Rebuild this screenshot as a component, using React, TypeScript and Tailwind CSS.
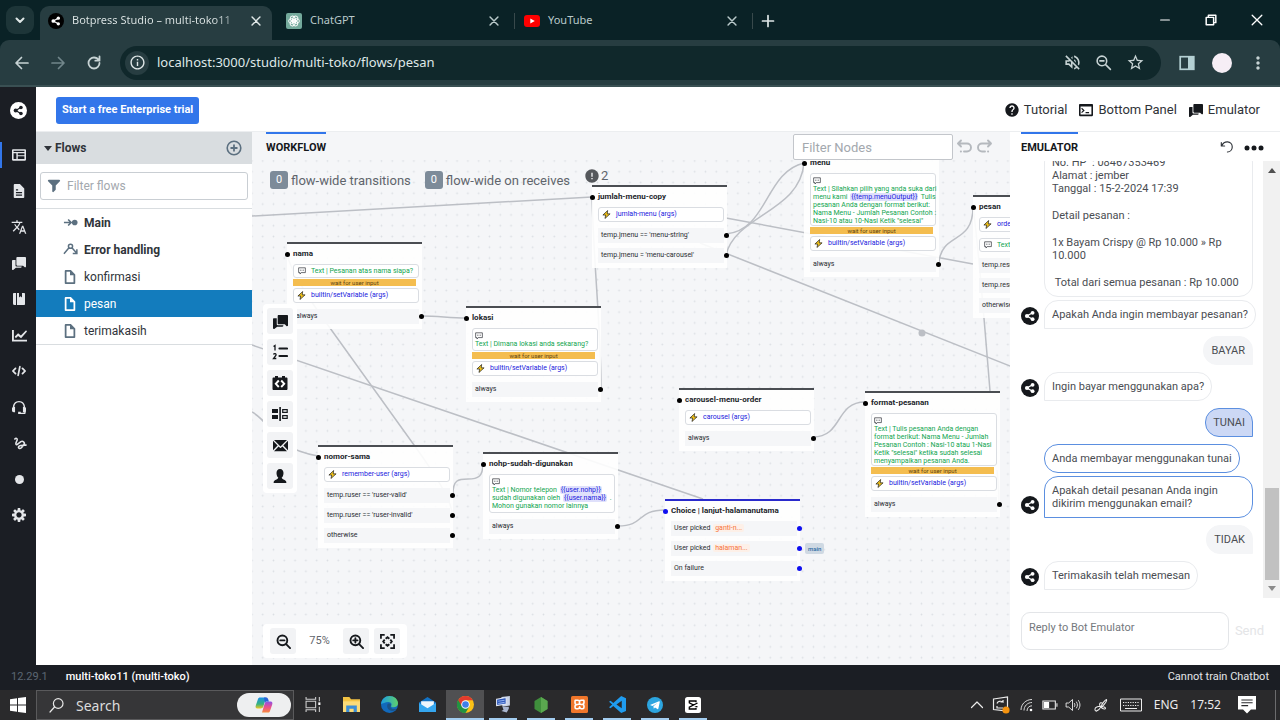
import React from "react";
import type { ReactNode } from "react";
import { MdTranslate, MdOutlineVolumeOff, MdStarBorder, MdHelp, MdError, MdMoreVert, MdOutlineInfo } from "react-icons/md";

type IconProps = { className?: string };

const P = {
  code: "M15.71 7.29l-3-3a1.003 1.003 0 00-1.42 1.42L13.59 8l-2.29 2.29a1.003 1.003 0 001.42 1.42l3-3c.18-.18.29-.43.29-.71 0-.28-.12-.53-.3-.71zM5 5a1.003 1.003 0 00-1.71-.71l-3 3C.11 7.47 0 7.72 0 8c0 .28.11.53.29.71l3 3a1.003 1.003 0 001.42-1.42L2.41 8 4.7 5.71c.19-.18.3-.43.3-.71zm4-3c-.48 0-.87.35-.96.81l-2 10c-.01.06-.04.12-.04.19 0 .55.45 1 1 1 .48 0 .87-.35.96-.81l2-10c.01-.06.04-.12.04-.19 0-.55-.45-1-1-1z",
  cog: "M15.19 6.39h-1.85c-.11-.37-.27-.71-.45-1.04l1.36-1.36c.31-.31.31-.82 0-1.13l-1.13-1.13a.803.803 0 00-1.13 0l-1.36 1.36c-.33-.17-.67-.33-1.04-.44V.79c0-.44-.36-.8-.8-.8h-1.6c-.44 0-.8.36-.8.8v1.86c-.39.12-.75.28-1.1.47l-1.3-1.3c-.3-.3-.79-.3-1.09 0L1.82 2.91c-.3.3-.3.79 0 1.09l1.3 1.3c-.2.34-.36.7-.48 1.09H.79c-.44 0-.8.36-.8.8v1.6c0 .44.36.8.8.8h1.85c.11.37.27.71.45 1.04l-1.36 1.36c-.31.31-.31.82 0 1.13l1.13 1.13c.31.31.82.31 1.13 0l1.36-1.36c.33.18.67.33 1.04.44v1.86c0 .44.36.8.8.8h1.6c.44 0 .8-.36.8-.8v-1.86c.39-.12.75-.28 1.1-.47l1.3 1.3c.3.3.79.3 1.09 0l1.09-1.09c.3-.3.3-.79 0-1.09l-1.3-1.3c.19-.35.36-.71.48-1.1h1.85c.44 0 .8-.36.8-.8v-1.6a.816.816 0 00-.81-.79zm-7.2 4.6c-1.66 0-3-1.34-3-3s1.34-3 3-3 3 1.34 3 3-1.34 3-3 3z",
  document: "M9 0H3c-.55 0-1 .45-1 1v14c0 .55.45 1 1 1h10c.55 0 1-.45 1-1V5L9 0zm3 14H4V2h4v4h4v8z",
  documentText: "M9 0H3c-.55 0-1 .45-1 1v14c0 .55.45 1 1 1h10c.55 0 1-.45 1-1V5L9 0zM4.500 6h2.500v1.500H4.500zM4.500 9h7v1.500h-7zM4.500 12h7v1.500h-7z",
  chat: "M4 11V4.500H1c-.55 0-1 .45-1 1V15a1 1 0 001.710.71L4.410 13.500H10c.55 0 1-.45 1-1V12H5c-.55 0-1-.45-1-1zM15 1H6c-.55 0-1 .45-1 1v8c0 .55.45 1 1 1h6.590l1.700 1.700c.6.6 1.710.2 1.710-.7V2c0-.55-.45-1-1-1z",
  envelope: "M0 3.06v9.88L4.94 8 0 3.06zM14.94 2H1.06L8 8.94 14.94 2zm-6.41 8.53c-.14.14-.32.22-.53.22s-.39-.08-.53-.22L6 9.06 1.06 14h13.88L10 9.06l-1.47 1.47zM11.06 8L16 12.94V3.06L11.06 8z",
  filter: "M13.99.99h-12a1.003 1.003 0 00-.71 1.71l4.71 4.71V14a1.003 1.003 0 001.71.71l2-2c.18-.18.29-.43.29-.71V7.41L14.7 2.7a1.003 1.003 0 00-.71-1.71z",
  panel: "M1 1.500h14c.55 0 1 .45 1 1v11c0 .55-.45 1-1 1H1c-.55 0-1-.45-1-1v-11c0-.55.45-1 1-1zM1.800 6v6.700H5V6zM6.600 6v2.200h7.600V6zM6.600 9.500v3.200h7.600V9.500zM1.800 3.200v1.300h12.400V3.200z",
  manual: "M1 0h3v16H2a2 2 0 01-2-2V1c0-.55.45-1 1-1zM5.300 0H8v6l2-1.600L12 6V0h3c.55 0 1 .45 1 1v14c0 .55-.45 1-1 1H5.300z",
  chart: "M0 2h2v10.500h14V14.500H0zM3 9l3.500-3.500 3 2.500L15 2.500l1 1.200L9.700 11 6.500 8.400 4 11z",
  headset: "M8 1C3.800 1 1 4.200 1 8l-1 1v3c0 1.100.9 2 2 2h1.500V8H2.700C2.700 5 5 2.700 8 2.700S13.300 5 13.300 8h-.8v6H14v.5H10V13.500H7V16h7.500c.8 0 1-.5 1-1.500.4-.5.5-1.500.5-2.500V9l-1-1c0-3.800-2.800-7-7-7z",
  person: "M8 0C5.300 0 4 2 4 4.500 4 7 5 9 6 9.800c0 1-.6 1.600-2 2.100C2 12.600.7 13.300.7 16h14.600c0-2.700-1.300-3.400-3.300-4.100-1.400-.5-2-1.100-2-2.100 1-.8 2-2.800 2-5.300C12 2 10.700 0 8 0z",
  console: "M1 1h14c.55 0 1 .45 1 1v12c0 .55-.45 1-1 1H1c-.55 0-1-.45-1-1V2c0-.55.45-1 1-1zM1.800 4v9.200h12.400V4zM3.400 5.500L6.500 8.500 3.400 11.500 2.500 10.500 4.600 8.500 2.500 6.500zM7.500 10.300h4v1.400h-4z",
};

function Glyph({ d, className = "" }: { d: string; className?: string }) {
  return (
    <svg viewBox="0 0 16 16" className={className} fill="currentColor" fillRule="evenodd" aria-hidden="true">
      <path d={d} />
    </svg>
  );
}

function Line({ d, className = "", w = 1.5 }: { d: string; className?: string; w?: number }) {
  return (
    <svg viewBox="0 0 16 16" className={className} fill="none" stroke="currentColor" strokeWidth={w} strokeLinecap="round" strokeLinejoin="round" aria-hidden="true">
      <path d={d} />
    </svg>
  );
}

function BotLogo({ className = "", bg, fg }: IconProps & { bg: string; fg: string }) {
  return (
    <svg viewBox="0 0 18 18" className={className} aria-hidden="true">
      <circle cx="9" cy="9" r="9" fill={bg} />
      <path d="M11.500 5.800L6 9l5.500 3.200" stroke={fg} strokeWidth="1.300" fill="none" />
      <circle cx="11.600" cy="5.800" r="1.900" fill={fg} />
      <circle cx="6" cy="9" r="2.100" fill={fg} />
      <circle cx="11.600" cy="12.200" r="1.900" fill={fg} />
    </svg>
  );
}

const CLOSE = "M3.500 3.500l9 9M12.500 3.500l-9 9";

function BrowserTabs() {
  return (
    <div className="flex h-10 shrink-0 items-end bg-[#0a2226] pl-[6px] text-[11px] text-[#b9c9ca]">
      <button aria-label="Search tabs" className="mb-[6px] flex h-7 w-7 items-center justify-center rounded-[9px] bg-[#1d3538] text-[#dfe7e7]">
        <Line d="M4.500 6.500L8 10l3.500-3.500" className="h-4 w-4" w={2} />
      </button>
      <div className="ml-[6px] flex h-[34px] w-[232px] items-center rounded-t-[9px] bg-[#273d41] pb-[5px] pl-2 pr-[9px] text-[#dfe7e7]">
        <BotLogo className="h-4 w-4 shrink-0" bg="#000" fg="#fff" />
        <span className="ml-2 flex-1 whitespace-nowrap bg-gradient-to-r from-[#dfe7e7] from-85% to-[#6f8082] bg-clip-text text-transparent">Botpress Studio – multi-toko11</span>
        <button aria-label="Close tab" className="ml-[10px]"><Line d={CLOSE} className="h-[14px] w-[14px]" w={1.7} /></button>
      </div>
      <div className="flex h-[34px] w-[242px] items-center pb-[5px] pl-[14px] pr-2">
        <svg viewBox="0 0 16 16" className="h-4 w-4 shrink-0" aria-hidden="true">
          <rect width="16" height="16" rx="2" fill="#74aa9c" />
          <g fill="none" stroke="#fff" strokeWidth=".9">
            <ellipse cx="8" cy="5.800" rx="2.400" ry="3.200" transform="rotate(30 8 8)" />
            <ellipse cx="8" cy="5.800" rx="2.400" ry="3.200" transform="rotate(90 8 8)" />
            <ellipse cx="8" cy="5.800" rx="2.400" ry="3.200" transform="rotate(150 8 8)" />
            <ellipse cx="8" cy="5.800" rx="2.400" ry="3.200" transform="rotate(210 8 8)" />
            <ellipse cx="8" cy="5.800" rx="2.400" ry="3.200" transform="rotate(270 8 8)" />
            <ellipse cx="8" cy="5.800" rx="2.400" ry="3.200" transform="rotate(330 8 8)" />
          </g>
        </svg>
        <span className="ml-2 flex-1">ChatGPT</span>
        <button aria-label="Close tab" className="mr-[5px]"><Line d={CLOSE} className="h-[14px] w-[14px]" w={1.7} /></button>
      </div>
      <div className="flex h-[34px] w-[238px] items-center pb-[5px]">
        <span className="h-4 w-px shrink-0 bg-[#38494b]" />
        <svg viewBox="0 0 16 12" className="ml-[9px] h-3 w-4 shrink-0" aria-hidden="true">
          <rect width="16" height="12" rx="3" fill="#f00" />
          <path d="M6.300 3.400v5.200L10.800 6z" fill="#fff" />
        </svg>
        <span className="ml-2 flex-1">YouTube</span>
        <button aria-label="Close tab" className="mr-[13px]"><Line d={CLOSE} className="h-[14px] w-[14px]" w={1.7} /></button>
      </div>
      <div className="flex h-[34px] flex-1 items-center pb-[5px]">
        <span className="h-4 w-px bg-[#38494b]" />
        <button aria-label="New tab" className="ml-[7px] text-[#dfe7e7]"><Line d="M8 2.500v11M2.500 8h11" className="h-4 w-4" w={1.7} /></button>
      </div>
      <div className="mb-[13px] flex items-center gap-8 pr-4 text-white">
        <button aria-label="Minimize"><Line d="M3 8h10" className="h-[14px] w-[14px]" w={1.3} /></button>
        <button aria-label="Restore"><Line d="M2.500 5h8.500v8.500H2.500zM5 5V2.500h8.500V11H11" className="h-[14px] w-[14px]" w={1.7} /></button>
        <button aria-label="Close window"><Line d="M2.500 2.500l11 11M13.500 2.500l-11 11" className="h-[14px] w-[14px]" w={1.5} /></button>
      </div>
    </div>
  );
}

function AddressBar() {
  return (
    <div className="bg-[#0a2226]">
      <div className="flex h-[47px] shrink-0 items-center rounded-t-[9px] border-b-2 border-[#3a5053] bg-[#273d41] pl-[14px] pr-3 text-[#c7d3d4]">
        <button aria-label="Back"><Line d="M14 8H2.500M7.500 2.500L2 8l5.500 5.500" className="h-4 w-4" w={1.7} /></button>
        <button aria-label="Forward" className="ml-5 text-[#71868a]"><Line d="M2 8h11.500M8.500 2.500L14 8l-5.500 5.500" className="h-4 w-4" w={1.7} /></button>
        <button aria-label="Reload" className="ml-5"><Line d="M13.500 8A5.500 5.500 0 118 2.500c2 0 3.700 1 4.700 2.600M13.500 1.500v4.200H9.300" className="h-4 w-4" w={1.8} /></button>
        <div className="ml-[18px] flex h-[34px] flex-1 items-center rounded-full bg-[#10282b] pl-[5px] pr-4">
          <span className="flex h-6 w-6 items-center justify-center rounded-full bg-[#273d41]">
            <MdOutlineInfo className="h-[17px] w-[17px] text-[#dfe7e7]" />
          </span>
          <input aria-label="Address" readOnly value="localhost:3000/studio/multi-toko/flows/pesan" className="ml-2 min-w-0 flex-1 bg-transparent text-[13px] text-[#dfe7e7] outline-none" />
          <MdOutlineVolumeOff className="h-[19px] w-[19px]" />
          <Line d="M11 6.500a4.500 4.500 0 11-9 0 4.500 4.500 0 019 0zM10 10l4.500 4.500M4.600 6.500h3.800" className="ml-[13px] h-[17px] w-[17px]" />
          <MdStarBorder className="ml-[14px] h-[19px] w-[19px]" />
        </div>
        <button aria-label="Side panel" className="ml-[18px]">
          <svg viewBox="0 0 16 16" className="h-4 w-4" aria-hidden="true"><rect x="1.200" y="1.700" width="13.600" height="12.600" fill="none" stroke="#b4d0d3" strokeWidth="1.700" /><rect x="9" y="1" width="6" height="14" fill="#b4d0d3" /></svg>
        </button>
        <button aria-label="Profile" className="ml-[17px] h-5 w-5 rounded-full bg-[#f6eef5]" />
        <button aria-label="Menu" className="ml-4"><MdMoreVert className="h-5 w-5" /></button>
      </div>
    </div>
  );
}

const NAV: { label: string; icon: ReactNode }[] = [
  { label: "Flows", icon: <Glyph d={P.panel} className="h-[14px] w-[14px]" /> },
  { label: "Content", icon: <Glyph d={P.documentText} className="h-[14px] w-[14px]" /> },
  { label: "NLU", icon: <MdTranslate className="h-4 w-4" /> },
  { label: "Q&A", icon: <Glyph d={P.chat} className="h-[14px] w-[14px]" /> },
  { label: "Library", icon: <Glyph d={P.manual} className="h-[14px] w-3" /> },
  { label: "Analytics", icon: <Glyph d={P.chart} className="h-[15px] w-[15px]" /> },
  { label: "Code editor", icon: <Glyph d={P.code} className="h-[14px] w-[14px]" /> },
  { label: "Human in the loop", icon: <Glyph d={P.headset} className="h-[14px] w-[14px]" /> },
  { label: "Misunderstood", icon: <Line d="M3 3.200C4.200 2 6 2.600 5.500 4.300L4.200 7.500C3.700 9 5 9.600 6 8.700L9.500 6C11.500 4.600 14.500 7.500 12.500 9.500L10 12.500C8.500 14 6 13 7.200 11.200 8.500 9.500 12 9.700 15 9.700" className="h-[15px] w-[15px]" w={1.7} /> },
  { label: "Module", icon: <span className="h-[9px] w-[9px] rounded-full bg-current" /> },
  { label: "Settings", icon: <Glyph d={P.cog} className="h-[14px] w-[14px]" /> },
];

function SideNav() {
  return (
    <nav className="flex w-9 shrink-0 flex-col bg-[#1b1e24] text-[#e4e6e9]">
      <a href="#home" aria-label="Home" className="flex h-[50px] items-center justify-center pb-1"><BotLogo className="h-[17px] w-[17px]" bg="#fff" fg="#1b1e24" /></a>
      {NAV.map((n, i) => (
        <a key={n.label} href={"#" + i} aria-label={n.label} className="flex h-9 items-center">
          <span className={i === 0 ? "h-[26px] w-[2px] bg-[#3276ea]" : "h-[26px] w-[2px]"} />
          <span className="flex flex-1 items-center justify-center">{n.icon}</span>
        </a>
      ))}
    </nav>
  );
}

function TopBar() {
  return (
    <header className="flex h-[45px] shrink-0 items-center border-b border-[#eceef0] bg-white pl-5 pr-5 pt-[2px] text-[13px] text-[#1b1e24]">
      <button className="h-[27px] rounded-[3px] bg-[#3276ea] px-[6px] text-[11px] font-bold text-white">Start a free Enterprise trial</button>
      <div className="ml-auto flex items-center gap-3 text-[#303338]">
        <button className="flex items-center gap-1"><MdHelp className="h-4 w-4 text-[#15181c]" />Tutorial</button>
        <button className="flex items-center gap-[5px]"><Glyph d={P.console} className="h-[14px] w-[14px] text-[#15181c]" />Bottom Panel</button>
        <button className="flex items-center gap-[5px]"><Glyph d={P.chat} className="h-[14px] w-[14px] text-[#15181c]" />Emulator</button>
      </div>
    </header>
  );
}

const TREE: { name: string; kind: "main" | "error" | "doc" }[] = [
  { name: "Main", kind: "main" },
  { name: "Error handling", kind: "error" },
  { name: "konfirmasi", kind: "doc" },
  { name: "pesan", kind: "doc" },
  { name: "terimakasih", kind: "doc" },
];

function FlowsPanel() {
  return (
    <aside className="flex w-[216px] shrink-0 flex-col bg-white text-[12px] text-[#30343a]">
      <div className="flex h-8 items-center bg-[#d9dde0] pl-2 pr-[10px]">
        <svg viewBox="0 0 8 5" className="h-[5px] w-2" aria-hidden="true"><path d="M0 0h8L4 5z" fill="#30343a" /></svg>
        <h2 className="ml-[3px] flex-1 font-bold">Flows</h2>
        <button aria-label="Add flow" className="text-[#5c7080]">
          <svg viewBox="0 0 16 16" className="h-4 w-4" fill="none" stroke="currentColor" aria-hidden="true"><circle cx="8" cy="8" r="6.800" strokeWidth="1.600" /><path d="M8 4.500v7M4.500 8h7" strokeWidth="1.800" /></svg>
        </button>
      </div>
      <div className="border-b border-[#d9dde0] px-1 pb-2 pt-2">
        <label className="flex h-7 items-center rounded-[3px] border border-[#c9ced3] px-[6px]">
          <Glyph d={P.filter} className="h-[14px] w-[14px] text-[#5c7080]" />
          <input aria-label="Filter flows" placeholder="Filter flows" className="ml-[6px] min-w-0 flex-1 outline-none placeholder:text-[#a3a8ae]" />
        </label>
      </div>
      <ul className="border-b border-[#d9dde0]">
        {TREE.map((t) => (
          <li key={t.name}>
            <a href={"#" + t.name} className={t.name === "pesan" ? "flex h-[27px] items-center bg-[#137cbd] pl-[26px] text-white" : "flex h-[27px] items-center pl-[26px]"}>
              <span className={t.name === "pesan" ? "flex w-4 justify-center" : "flex w-4 justify-center text-[#5c7080]"}>
                {t.kind === "doc" && <Glyph d={P.document} className="h-[14px] w-[14px]" />}
                {t.kind === "main" && <svg viewBox="0 0 16 16" className="h-[15px] w-[15px]" aria-hidden="true"><path d="M1 8h7M5.500 4.800L8.700 8l-3.200 3.200" fill="none" stroke="currentColor" strokeWidth="1.700" /><circle cx="12.500" cy="8" r="3" fill="currentColor" /></svg>}
                {t.kind === "error" && <svg viewBox="0 0 16 16" className="h-[15px] w-[15px]" aria-hidden="true" fill="none" stroke="currentColor" strokeWidth="1.600"><circle cx="8" cy="4.500" r="2.200" /><path d="M6.400 6.200L1 12.500M9.500 6.200l4.500 5M14.800 7.800v4.400h-4.400" /></svg>}
              </span>
              <span className={t.kind === "doc" ? "ml-[6px]" : "ml-[6px] font-bold"}>{t.name}</span>
            </a>
          </li>
        ))}
      </ul>
    </aside>
  );
}

function Bolt() {
  return <svg viewBox="0 0 10 10" className="h-[9px] w-[9px] shrink-0" aria-hidden="true"><path d="M6.300.6L1 5.600h3.100L3.300 9.400 9 4.300H5.800z" fill="#f5c518" stroke="#222" strokeWidth=".8" strokeLinejoin="round" /></svg>;
}
function Speech() {
  return <svg viewBox="0 0 10 10" className="h-2 w-2 shrink-0" aria-hidden="true"><path d="M.8 1h8.400v6H4L2.500 8.800V7H.8z" fill="none" stroke="#33373d" strokeWidth=".9" /><path d="M2.500 4h1M4.500 4h1M6.500 4h1" stroke="#33373d" strokeWidth="1" /></svg>;
}
function Action({ children }: { children: string }) {
  return (
    <div className="flex h-[15px] items-center overflow-hidden rounded-[3px] border border-[#dadde2] bg-white pl-[3px] text-[7px] text-[#2020dd]">
      <Bolt /><span className="ml-[5px] whitespace-nowrap">{children}</span>
    </div>
  );
}
function Say({ children }: { children: string }) {
  return (
    <div className="flex h-[14px] items-center rounded-[3px] border border-[#dadde2] bg-white pl-1 text-[7px] text-[#12a550]">
      <Speech /><span className="ml-[5px] whitespace-nowrap">{children}</span>
    </div>
  );
}
function Tok({ children }: { children: string }) {
  return <span className="mx-px rounded-[2px] bg-[#dfe0fb] px-px text-[#2020dd]">{children}</span>;
}
function LongSay({ lines }: { lines: ReactNode[] }) {
  return (
    <div className="max-h-[53px] rounded-[3px] border border-[#dadde2] bg-white px-[2px] pb-[2px] pt-[3px] text-[7px] leading-[8px] text-[#12a550]">
      <Speech />
      {lines.map((l, i) => <p key={i} className="whitespace-nowrap">{l}</p>)}
    </div>
  );
}
function Wait() {
  return <div className="mb-px mr-[3px] h-[7px] bg-[#f4bd4f] text-center text-[6px] leading-[7px] text-[#5b430f]">wait for user input</div>;
}

function FlowNode({ place, title, body, rows, choice = false }: { place: string; title: string; body?: ReactNode; rows: ReactNode[]; choice?: boolean }) {
  const dot = choice ? "absolute h-[5px] w-[5px] rounded-full bg-[#1010f0]" : "absolute h-[5px] w-[5px] rounded-full bg-black";
  return (
    <section className={"absolute w-[135px] border-t-2 bg-white/90 pb-[5px] pl-[6px] pr-[3px] " + (choice ? "border-[#2a2acc] " : "border-[#4a4d52] ") + place}>
      <div className="flex h-[20px] items-center">
        <span className={dot + " -left-[2px]"} />
        <h3 className="whitespace-nowrap text-[8px] font-bold text-[#22252a]">{title}</h3>
      </div>
      {body && <div className="mb-[6px] flex flex-col gap-px">{body}</div>}
      <ul className="flex flex-col gap-[5px]">
        {rows.map((r, i) => (
          <li key={i} className="flex h-[15px] items-center bg-[#f5f6f8] pl-[3px] text-[7px] text-[#2a2d32]">
            <span className="whitespace-nowrap">{r}</span>
            <span className={dot + " -right-[2px]"} />
          </li>
        ))}
      </ul>
    </section>
  );
}

function Wires() {
  return (
    <svg className="absolute inset-0 h-full w-full" aria-hidden="true">
      <defs>
        <pattern id="grid-dots" x="5.300" y="6.300" width="10.800" height="10.800" patternUnits="userSpaceOnUse">
          <circle cx="5.400" cy="5.400" r=".9" fill="#dcdfe4" />
        </pattern>
      </defs>
      <rect width="100%" height="100%" fill="url(#grid-dots)" />
      <g transform="translate(-252 -160)" fill="none" stroke="#bcbfc5" strokeWidth="1.500">
        <path d="M252 216L592 197" />
        <path d="M422 316C440 316 448 318 467 318" />
        <path d="M287 253C290 275 330 328 330 328L414 445C430 467 452 500 452 514" />
        <path d="M252 345L703 499" />
        <path d="M252 412C275 425 270 447 318 456" />
        <path d="M453 494C453 480 458 479 468 479S483 477 483 463" />
        <path d="M618 526C645 526 636 510 665 510" />
        <path d="M813 437C843 437 835 402 865 402" />
        <path d="M726 234C768 230 765 172 804 163" />
        <path d="M726 255C735 215 800 212 804 163" />
        <path d="M726 218L973 264" />
        <path d="M700 243L1020 370" />
        <path d="M939 262C942 232 973 245 973 207" />
        <path d="M973 207C978 240 985 330 990 391" />
        <path d="M601 388C601 330 594 270 592 197" />
        <path d="M999 502C999 490 998 480 997 470" />
        <circle cx="922" cy="333" r="3.500" fill="#bcbfc5" stroke="none" />
      </g>
    </svg>
  );
}

const TOOLS: { label: string; icon: ReactNode }[] = [
  { label: "Say", icon: <Glyph d={P.chat} className="h-[15px] w-[15px]" /> },
  { label: "Choice", icon: <svg viewBox="0 0 16 16" className="h-4 w-4" fill="none" stroke="currentColor" strokeWidth="1.300" aria-hidden="true"><path d="M1.500 2.500L3 1.500V6.500M1.500 10.500c.5-1.300 3-1 2.500.7L1.500 14.500H4.300" /><path d="M7.500 4.500H15M7.500 12H15" strokeWidth="2.200" strokeLinecap="round" /></svg> },
  { label: "Execute code", icon: <svg viewBox="0 0 16 16" className="h-4 w-4" aria-hidden="true"><path d="M3 1h3v1.500h4V1h3v1.500h1.500c.5 0 1 .5 1 1v10.500c0 .5-.5 1-1 1h-13c-.5 0-1-.5-1-1V3.500c0-.5.500-1 1-1H3z" fill="currentColor" /><path d="M6.800 5.500L3.800 8.800l3 3.200M9.200 5.500l3 3.300-3 3.200" stroke="#fff" strokeWidth="1.900" fill="none" /></svg> },
  { label: "Split", icon: <svg viewBox="0 0 16 16" className="h-4 w-4" fill="currentColor" aria-hidden="true"><path d="M0 3h6v4H0zM0 9h6v4H0zM7.300 1h1.600v14H7.300z" /><path d="M10.700 3.700h4.500v2.600h-4.500zM10.700 9.700h4.500v2.600h-4.500z" fill="none" stroke="currentColor" strokeWidth="1.200" /></svg> },
  { label: "Email", icon: <Glyph d={P.envelope} className="h-[15px] w-[15px]" /> },
  { label: "Handoff", icon: <Glyph d={P.person} className="h-[14px] w-[14px]" /> },
];

const ZOOM = "M12 6.800a5.200 5.200 0 11-10.400 0 5.200 5.200 0 0110.400 0zM10.800 10.800L15 15M4.500 6.800h4.600";
const toolBtn = "flex h-[26px] w-[26px] items-center justify-center rounded-[3px] bg-[#f2f3f5] text-[#15181c]";

function Badge({ label }: { label: string }) {
  return (
    <div className="flex items-center gap-[3px] text-[13px] text-[#5f656c]">
      <span className="flex h-[18px] w-[18px] items-center justify-center rounded-[3px] bg-[#7d8b99] text-[11px] text-white">0</span>
      {label}
    </div>
  );
}

function Workflow() {
  return (
    <main className="flex min-w-0 flex-1 flex-col bg-[#f5f6f8]">
      <div className="flex h-7 shrink-0 items-start pl-[14px] pr-[17px]">
        <h2 className="flex h-[23px] items-end border-t-2 border-[#3276ea] text-[11px] font-bold leading-[15px] text-[#15181c]">WORKFLOW</h2>
        <div className="ml-auto mt-[2px] flex items-center">
          <input aria-label="Filter nodes" placeholder="Filter Nodes" className="h-[26px] w-40 rounded-[2px] border border-[#c3c6cb] bg-white px-2 text-[13px] outline-none placeholder:text-[#a3a8ae]" />
          <button aria-label="Undo" className="ml-[3px] text-[#b5b9be]"><Line d="M5 1.500L2 4.500l3 3M2.500 4.500H11a3.500 3.500 0 010 8H8M4.800 12.500h.2" className="h-4 w-4" w={1.900} /></button>
          <button aria-label="Redo" className="ml-[5px] text-[#b5b9be]"><Line d="M11 1.500l3 3-3 3M13.500 4.500H5a3.500 3.500 0 000 8h3M11 12.500h.2" className="h-4 w-4" w={1.900} /></button>
        </div>
      </div>
      <div className="relative flex flex-1 flex-col overflow-hidden">
        <Wires />
        <FlowNode place="left-[35px] top-[82px]" title="nama" body={<><Say>Text | Pesanan atas nama siapa?</Say><Wait /><Action>builtin/setVariable (args)</Action></>} rows={["always"]} />
        <FlowNode place="left-[214px] top-[146px]" title="lokasi" body={<><LongSay lines={["Text | Dimana lokasi anda sekarang?"]} /><Wait /><Action>builtin/setVariable (args)</Action></>} rows={["always"]} />
        <FlowNode place="left-[340px] top-[25px]" title="jumlah-menu-copy" body={<Action>jumlah-menu (args)</Action>} rows={["temp.jmenu == 'menu-string'", "temp.jmenu = 'menu-carousel'"]} />
        <FlowNode place="left-[552px] -top-[9px]" title="menu" body={<><LongSay lines={["Text | Silahkan pilih yang anda suka dari", <>menu kami <Tok>{"{{temp.menuOutput}}"}</Tok> Tulis</>, "pesanan Anda dengan format berikut:", "Nama Menu - Jumlah Pesanan Contoh :", "Nasi-10 atau 10-Nasi Ketik \"selesai\""]} /><Wait /><Action>builtin/setVariable (args)</Action></>} rows={["always"]} />
        <FlowNode place="left-[721px] top-[35px]" title="pesan" body={<><Action>order-menu (args)</Action><div className="h-1" /><Say>Text | Pesanan Anda</Say></>} rows={["temp.result == 'success'", "temp.result == 'failed'", "otherwise"]} />
        <FlowNode place="left-[427px] top-[228px]" title="carousel-menu-order" body={<Action>carousel (args)</Action>} rows={["always"]} />
        <FlowNode place="left-[613px] top-[231px]" title="format-pesanan" body={<><LongSay lines={["Text | Tulis pesanan Anda dengan", "format berikut: Nama Menu - Jumlah", "Pesanan Contoh : Nasi-10 atau 1-Nasi", "Ketik \"selesai\" ketika sudah selesai", "menyampaikan pesanan Anda."]} /><Wait /><Action>builtin/setVariable (args)</Action></>} rows={["always"]} />
        <FlowNode place="left-[66px] top-[285px]" title="nomor-sama" body={<Action>remember-user (args)</Action>} rows={["temp.ruser == 'ruser-valid'", "temp.ruser == 'ruser-invalid'", "otherwise"]} />
        <FlowNode place="left-[231px] top-[292px]" title="nohp-sudah-digunakan" body={<LongSay lines={[<>Text | Nomor telepon <Tok>{"{{user.nohp}}"}</Tok></>, <>sudah digunakan oleh <Tok>{"{{user.nama}}"}</Tok> .</>, "Mohon gunakan nomor lainnya"]} />} rows={["always"]} />
        <FlowNode choice place="left-[413px] top-[339px]" title="Choice | lanjut-halamanutama" rows={[
          <>User picked <span className="ml-px rounded-[2px] bg-[#fdf0e8] px-[2px] text-[#f5733c]">ganti-n...</span></>,
          <>User picked <span className="ml-px rounded-[2px] bg-[#fdf0e8] px-[2px] text-[#f5733c]">halaman...</span></>,
          "On failure",
        ]} />
        <span className="absolute left-[553px] top-[383px] rounded-[2px] bg-[#cfd9e3] px-[3px] text-[6px] font-medium leading-[11px] text-[#2b6ca3]">main</span>

        <div className="relative flex items-center gap-[14px] pl-[18px] pt-[6px]">
          <Badge label="flow-wide transitions" />
          <Badge label="flow-wide on receives" />
          <div className="mb-[9px] flex items-center text-[13px] text-[#5f656c]"><MdError className="mr-px h-4 w-4 text-[#55585c]" />2</div>
        </div>

        <div className="absolute left-[11px] top-[144px] flex flex-col gap-[5px] rounded-[4px] bg-white px-1 py-1">
          {TOOLS.map((t) => <button key={t.label} aria-label={t.label} className={toolBtn}>{t.icon}</button>)}
        </div>
        <div className="absolute bottom-[7px] left-[11px] flex h-[34px] items-center rounded-[4px] bg-white px-[7px]">
          <button aria-label="Zoom out" className={toolBtn}><Line d={ZOOM} className="h-[15px] w-[15px]" w={2} /></button>
          <span className="w-[47px] text-center text-[11px] text-[#5f656c]">75%</span>
          <button aria-label="Zoom in" className={toolBtn}><Line d={ZOOM + "M6.800 4.500v4.600"} className="h-[15px] w-[15px]" w={2} /></button>
          <button aria-label="Zoom to fit" className={toolBtn + " ml-[5px]"}>
            <svg viewBox="0 0 16 16" className="h-[15px] w-[15px]" fill="none" stroke="currentColor" strokeWidth="1.900" aria-hidden="true"><path d="M1 5V1h4M11 1h4v4M15 11v4h-4M5 15H1v-4M6 5l2-1.600L10 5M11 6l1.600 2L11 10M10 11l-2 1.600L6 11M5 10L3.400 8 5 6" /></svg>
          </button>
        </div>
      </div>
    </main>
  );
}

function Bot({ children }: { children: ReactNode }) {
  return (
    <div className="flex items-end gap-[5px]">
      <BotLogo className="mb-1 h-[18px] w-[18px] shrink-0" bg="#15181c" fg="#fff" />
      <div className="flex min-w-0 flex-1 flex-col items-start gap-[3px]">{children}</div>
    </div>
  );
}
function Bubble({ children, active = false, tail = true, full = false }: { children: ReactNode; active?: boolean; tail?: boolean; full?: boolean }) {
  return (
    <div className={"whitespace-nowrap rounded-[14px] border bg-white px-[7px] py-[7px] " + (active ? "border-[#5b8fe0] " : "border-[#e9ebee] ") + (tail ? "rounded-bl-none " : "") + (full ? "w-full" : "")}>{children}</div>
  );
}
function User({ children, active = false }: { children: string; active?: boolean }) {
  return (
    <div className={"self-end rounded-[14px] rounded-br-none border px-[7px] py-[7px] " + (active ? "border-[#5b8fe0] bg-[#ccd8f5]" : "border-[#f4f5f7] bg-[#f4f5f7]")}>{children}</div>
  );
}

function Emulator() {
  return (
    <aside className="flex w-[270px] shrink-0 flex-col bg-white text-[#4a4d52]">
      <div className="flex h-[29px] shrink-0 items-start pl-[11px] pr-4">
        <h2 className="flex h-[23px] items-end border-t-2 border-[#3276ea] text-[11px] font-bold leading-[15px] text-[#15181c]">EMULATOR</h2>
        <button aria-label="New session" className="ml-auto mt-2 text-[#30343a]"><Line d="M2 6.500C3.500 3.500 6 2 8.700 2.200c3 .2 5.300 2.700 5.300 5.700 0 3-2.300 5.600-5.500 5.800M1.500 3v3.800h3.800" className="h-[14px] w-[14px]" w={1.300} /></button>
        <button aria-label="More" className="ml-[10px] mt-[9px] text-[#15181c]">
          <svg viewBox="0 0 20 14" className="h-[14px] w-5" fill="currentColor" aria-hidden="true"><circle cx="3" cy="7" r="2.500" /><circle cx="10" cy="7" r="2.500" /><circle cx="17" cy="7" r="2.500" /></svg>
        </button>
      </div>
      <div className="flex min-h-0 flex-1">
        <div className="flex min-w-0 flex-1 flex-col justify-end gap-[7px] overflow-hidden pb-2 pl-[11px] pr-[10px] text-[11px] leading-[13px]">
          <Bot>
            <Bubble tail={false} full>
              <div className="flex flex-col gap-[14px]">
                <p>No. HP&nbsp; : 08467353469<br />Alamat : jember<br />Tanggal : 15-2-2024 17:39</p>
                <p>Detail pesanan :</p>
                <p>1x Bayam Crispy @ Rp 10.000 » Rp<br />10.000</p>
                <p>&nbsp;Total dari semua pesanan : Rp 10.000</p>
              </div>
            </Bubble>
            <Bubble>Apakah Anda ingin membayar pesanan?</Bubble>
          </Bot>
          <User>BAYAR</User>
          <Bot><Bubble>Ingin bayar menggunakan apa?</Bubble></Bot>
          <User active>TUNAI</User>
          <Bot>
            <Bubble active tail={false}>Anda membayar menggunakan tunai</Bubble>
            <Bubble active full>Apakah detail pesanan Anda ingin<br />dikirim menggunakan email?</Bubble>
          </Bot>
          <User>TIDAK</User>
          <Bot><Bubble>Terimakasih telah memesan</Bubble></Bot>
        </div>
        <div className="flex w-[17px] flex-col items-center bg-[#f1f1f1] py-[7px]" aria-hidden="true">
          <svg viewBox="0 0 8 5" className="h-[5px] w-2"><path d="M0 5h8L4 0z" fill="#505050" /></svg>
          <div className="flex-1" />
          <div className="mb-[6px] h-[92px] w-[14px] bg-[#c1c1c1]" />
          <svg viewBox="0 0 8 5" className="h-[5px] w-2"><path d="M0 0h8L4 5z" fill="#8a8a8a" /></svg>
        </div>
      </div>
      <form className="flex items-center gap-[6px] pb-[15px] pl-[11px] pr-4 pt-[14px]">
        <textarea aria-label="Reply to Bot Emulator" placeholder="Reply to Bot Emulator" className="h-[38px] min-w-0 flex-1 resize-none rounded-[9px] border border-[#e3e5e8] px-[7px] pt-2 text-[11px] leading-[14px] outline-none placeholder:text-[#74787d]" />
        <button type="button" disabled className="text-[13px] text-[#e4e5e7]">Send</button>
      </form>
    </aside>
  );
}

const slot = "flex h-full w-[38px] flex-col items-center";
function Slot({ label, state = "idle", children }: { label: string; state?: "idle" | "open" | "active"; children: ReactNode }) {
  return (
    <button aria-label={label} className={state === "active" ? slot + " bg-[#505052]" : slot}>
      <span className="flex flex-1 items-center pt-px">{children}</span>
      <span className={state === "idle" ? "h-[2px] w-7" : state === "open" ? "h-[2px] w-7 bg-[#a3cdf0]" : "h-[2px] w-full bg-[#a3cdf0]"} />
    </button>
  );
}

function Taskbar() {
  const s = "h-[17px] w-[17px]";
  return (
    <div className="flex h-[30px] shrink-0 items-center bg-[#2a2a2c] text-white">
      <button aria-label="Start" className="flex w-9 justify-center"><svg viewBox="0 0 16 16" className="h-4 w-4" fill="#fff" aria-hidden="true"><path d="M0 2.200l7-1v6.400H0zM8 1l8-1v7.600H8zM0 8.500h7v6.300l-7-1zM8 8.500h8V16l-8-1z" /></svg></button>
      <label className="flex h-full w-[258px] items-center border border-[#5a5a5c] bg-[#363638] pl-3 pr-[2px]">
        <Line d="M14 6.500a4.800 4.800 0 11-9.600 0 4.800 4.800 0 019.600 0zM5.500 10L1 15" className="h-4 w-4 text-[#e8e8e8]" w={1.200} />
        <input aria-label="Search" placeholder="Search" className="ml-[11px] min-w-0 flex-1 bg-transparent text-[14px] outline-none placeholder:text-[#dcdcdc]" />
        <span className="flex h-6 w-[54px] items-center justify-center rounded-full bg-[#eeeff0]">
          <svg viewBox="0 0 18 16" className="h-4 w-[18px]" aria-hidden="true">
            <defs>
              <linearGradient id="cp-a" x1="0" y1="0" x2="0" y2="1"><stop offset="0" stopColor="#1b8fe8" /><stop offset=".6" stopColor="#36b37e" /><stop offset="1" stopColor="#f2c61f" /></linearGradient>
              <linearGradient id="cp-b" x1="0" y1="0" x2="0" y2="1"><stop offset="0" stopColor="#8b52e8" /><stop offset=".5" stopColor="#ea4f8e" /><stop offset="1" stopColor="#f88c3e" /></linearGradient>
            </defs>
            <path d="M5 .5h6L8.500 9c-.5 1.800-1.500 2.500-3 2.500H2.500C.5 11.500.3 10 .8 8.500L3 2c.4-1 1-1.500 2-1.500z" fill="url(#cp-a)" />
            <path d="M13 15.500H7L9.500 7c.5-1.800 1.500-2.500 3-2.500h3c2 0 2.200 1.500 1.700 3L15 14c-.4 1-1 1.500-2 1.500z" fill="url(#cp-b)" />
            <path d="M9 .5h2.200c1 0 1.600.6 1.900 1.500l.8 2.500h-1.600c-1.200 0-2 .4-2.500 1.500z" fill="#2a62d8" />
          </svg>
        </span>
      </label>
      <div className="flex h-full">
        <Slot label="Task view"><svg viewBox="0 0 16 16" className={s} fill="none" stroke="#d0d0d0" aria-hidden="true"><path d="M1 1v2h9V1M1 5h9v6H1zM1 15v-2h9v2M13.500 1v4M13.500 10v5" /><path d="M13.500 6v2.500" stroke="#fff" strokeWidth="2" /></svg></Slot>
        <Slot label="Files"><svg viewBox="0 0 16 16" className={s} aria-hidden="true"><path d="M0 1h6l1.500 2H16v12H0z" fill="#f5c443" /><path d="M0 5h16v10H0z" fill="#fbdb78" /><path d="M3 9h10v6h-3v-3H6v3H3z" fill="#3b8ed6" /></svg></Slot>
        <Slot label="Edge"><svg viewBox="0 0 16 16" className={s} aria-hidden="true"><defs><linearGradient id="eg" x1="0" y1="0" x2="1" y2="0"><stop offset="0" stopColor="#1b9de2" /><stop offset="1" stopColor="#5fd06b" /></linearGradient></defs><circle cx="8" cy="8" r="8" fill="#1269bb" /><path d="M0 7.500C.5 3 4 0 8 0c4.500 0 8 3 8 6.800 0 2.500-2 3.900-4.200 3.900-1.700 0-2.500-.6-2.300-1.200.9-1 .6-3.800-2.500-3.800-3.200 0-6 2-7 1.800z" fill="url(#eg)" /><path d="M6 8c-1 3 1.500 6 4.500 6 2 0 3.500-1 4.500-2.200-2 .9-5.500.7-6-1.300-.2-1 .5-1.200.5-2.200C9 7 6.500 6.500 6 8z" fill="#2a2a2c" opacity=".35" /></svg></Slot>
        <Slot label="Mail"><svg viewBox="0 0 16 16" className={s} aria-hidden="true"><path d="M0 6l8-5 8 5v9H0z" fill="#1272c4" /><path d="M2 5h12v5l-6 3-6-3z" fill="#eef6fd" /><path d="M0 6.500l8 5 8-5V15H0z" fill="#35a6ef" /></svg></Slot>
        <Slot label="Chrome" state="active"><svg viewBox="0 0 16 16" className={s} aria-hidden="true"><circle cx="8" cy="8" r="8" fill="#fbc116" /><path d="M8 8L1.070 4A8 8 0 0114.930 4H8z" fill="#e33b2e" /><path d="M1.070 4A8 8 0 008 16l3.500-6z" fill="#229342" /><path d="M1.070 4L4.500 10 8 8V4z" fill="#e33b2e" /><path d="M1.070 4l3.500 6L8 12l-1 3.950A8 8 0 011.070 4z" fill="#229342" /><circle cx="8" cy="8" r="4" fill="#fff" /><circle cx="8" cy="8" r="3.100" fill="#3f7fe8" /></svg></Slot>
        <Slot label="Remote desktop" state="open"><svg viewBox="0 0 16 16" className={s} aria-hidden="true"><path d="M6 1l8-1v9l-7 1z" fill="#c9d3e6" /><path d="M1.500 3l9-1.500v6L1.500 9z" fill="#2a54b8" stroke="#e4eaf5" /><path d="M3 5l6-1M3 7l6-1" stroke="#8fb0ee" /><path d="M7 10h6v2l-2 3.500-5-1.500 2-1z" fill="#aab7d0" /></svg></Slot>
        <Slot label="Node" state="open"><svg viewBox="0 0 16 16" className="h-4 w-4" aria-hidden="true"><path d="M8 0l6.500 4v8L8 16l-6.500-4V4z" fill="#3f8f3c" /><path d="M8 0l6.500 4v8L8 16z" fill="#5aa84f" /></svg></Slot>
        <Slot label="XAMPP" state="open"><svg viewBox="0 0 16 16" className={s} aria-hidden="true"><rect width="16" height="16" rx="1.500" fill="#f0762a" /><path d="M3.500 4h3c1 0 1.500.5 1.500 1.500V6.500C8 7.500 8.500 8 9.500 8H11M12.500 4h-3C8.500 4 8 4.500 8 5.500V6.500C8 7.500 7.500 8 6.500 8H5M3.800 4v2.500C3.800 7.500 4.300 8 5 8s-1.200.5-1.200 1.500v1.200C3.800 11.700 4.300 12 5 12h1.500C7.500 12 8 11.500 8 10.500S8.500 12 9.500 12H11c.8 0 1.200-.5 1.200-1.300V9.500C12.200 8.500 11.700 8 11 8s1.200-.5 1.200-1.500V4" fill="none" stroke="#fff" strokeWidth="1.500" strokeLinejoin="round" /></svg></Slot>
        <Slot label="VS Code" state="open"><svg viewBox="0 0 16 16" className={s} aria-hidden="true"><path d="M11.500 0L16 2v12l-4.500 2L4 9.500 1.500 11.500 0 10.500 3 8 0 5.500l1.500-1L4 6.500zM12 4.500L7 8l5 3.500z" fill="#1f9cf0" fillRule="evenodd" /></svg></Slot>
        <Slot label="Telegram" state="open"><svg viewBox="0 0 16 16" className="h-4 w-4" aria-hidden="true"><circle cx="8" cy="8" r="8" fill="#2ca5e0" /><path d="M3 8l9-3.800c.5-.2.9.1.8.7l-1.500 6.900c-.1.500-.5.600-.9.300L8 10.500l-1.200 1.200-.4-2.400L10.500 6 5.500 9z" fill="#fff" /></svg></Slot>
        <Slot label="CapCut" state="open"><svg viewBox="0 0 16 16" className="h-4 w-4" aria-hidden="true"><rect width="16" height="16" rx="2.500" fill="#fff" /><path d="M11 5.300V4H4.300v1.800L12.500 10M11 10.700V12H4.300v-1.800L12.500 6" fill="none" stroke="#000" strokeWidth="1.300" /></svg></Slot>
      </div>
      <div className="ml-auto flex items-center text-[13px] text-[#ececec]">
        <Line d="M2.500 10.500L8 5l5.500 5.500" className="h-4 w-4" w={1.200} />
        <svg viewBox="0 0 18 18" className="ml-[7px] h-[18px] w-[18px]" fill="none" stroke="#ececec" strokeWidth="1.200" aria-hidden="true"><path d="M1.500 3L15.500 1v14l-14-1.500zM5 7.500c.5-2 3.500-3 6-1.500V4M11 6H8.500M5 10v2h6" /><circle cx="14" cy="14" r="3.600" fill="#f5930f" stroke="none" /></svg>
        <svg viewBox="0 0 16 16" className="ml-[9px] h-4 w-4" fill="none" stroke="#d8d8d8" aria-hidden="true"><path d="M2 13C2 7 7 2.500 13 2.500M5 13.500c0-4.500 3.500-8 8-8M8 14c0-3 2-5.200 5-5.200" /><circle cx="12" cy="13" r="1.300" fill="#fff" stroke="none" /></svg>
        <svg viewBox="0 0 18 12" className="ml-[7px] h-3 w-4" fill="none" stroke="#ececec" strokeWidth="1.200" aria-hidden="true"><path d="M1 1.500h14v9H1zM16.800 4v4" /><path d="M2 2.500h6v7H2z" fill="#fff" stroke="none" /></svg>
        <Line d="M1.500 6h2.200L7.500 2.500v11L3.700 10H1.500zM9.500 6.500c.6 1 .6 2 0 3M11.500 5c1.300 2 1.300 4 0 6M13.500 3.500c2 3 2 6 0 9" className="ml-[7px] h-4 w-4" w={0.900} />
        <Line d="M14.500 1.500c-1.500 0-5 5-6.500 8.500-.8 2-2.500 3.500-4.500 4-2-.5-2-3.500.5-4.500s6-.5 8 0c2 .8 1.500 2.500 0 2.300C9.500 11.500 7 9 7 7s2-2.500 3-1.500M14.500 1.500C15 3 12 7 9.500 9.500" className="ml-3 h-[15px] w-[15px]" w={1.100} />
        <svg viewBox="0 0 22 14" className="ml-3 h-[14px] w-[22px]" fill="none" stroke="#ececec" aria-hidden="true"><path d="M.5 1h21v12H.5z" /><path d="M3 4.500h16M3 7.500h16" strokeDasharray="1.200 1.200" strokeWidth="1.200" /><path d="M5 10.500h12" /></svg>
        <span className="ml-3 text-[12px]">ENG</span>
        <span className="ml-3 text-[12px]">17:52</span>
        <svg viewBox="0 0 16 16" className="ml-[17px] h-[18px] w-[18px]" aria-hidden="true"><path d="M0 0h16v12h-4.500L8 15.500 4.500 12H0z" fill="#fff" /><path d="M3 3.500h10M3 6h10M3 8.500h6" stroke="#2a2a2c" /></svg>
        <span className="ml-[19px] mr-1 h-[30px] w-px bg-[#6c6c6e]" />
      </div>
    </div>
  );
}

export default function App() {
  return (
    <div className="flex h-screen min-h-[600px] flex-col overflow-hidden bg-white font-['Roboto',sans-serif]">
      <div className="shrink-0 font-['Noto_Sans','Open_Sans',sans-serif]">
        <BrowserTabs />
        <AddressBar />
      </div>
      <div className="flex min-h-0 flex-1">
        <SideNav />
        <div className="flex min-w-0 flex-1 flex-col">
          <TopBar />
          <div className="flex min-h-0 flex-1">
            <FlowsPanel />
            <Workflow />
            <Emulator />
          </div>
        </div>
      </div>
      <footer className="flex h-[25px] shrink-0 items-center bg-[#1b1e24] pl-[11px] pr-[11px] text-[11px] text-[#e4e6e9]">
        <span className="text-[#5c6773]">12.29.1</span>
        <span className="ml-[18px] font-medium text-white">multi-toko11 (multi-toko)</span>
        <span className="ml-auto">Cannot train Chatbot</span>
      </footer>
      <div className="shrink-0 font-['Noto_Sans','Open_Sans',sans-serif]">
        <Taskbar />
      </div>
    </div>
  );
}
